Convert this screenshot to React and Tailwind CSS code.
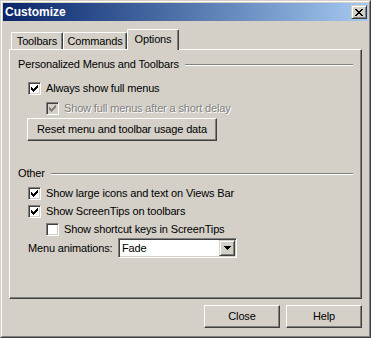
import React from "react";

const CHECK = [
  [6, 0], [5, 1], [6, 1], [0, 2], [4, 2], [5, 2], [6, 2],
  [0, 3], [1, 3], [3, 3], [4, 3], [5, 3],
  [0, 4], [1, 4], [2, 4], [3, 4], [4, 4],
  [1, 5], [2, 5], [3, 5], [2, 6],
];

function CheckMark({ color }) {
  return (
    <svg width="7" height="7" viewBox="0 0 7 7" shapeRendering="crispEdges">
      {CHECK.map(([x, y]) => (
        <rect key={`${x}-${y}`} x={x} y={y} width="1" height="1" fill={color} />
      ))}
    </svg>
  );
}

function Checkbox({ checked, disabled, label, indent }) {
  return (
    <div className={`flex h-[13px] items-center gap-[5px] ${indent ? "ml-[36px]" : "ml-[18px]"}`}>
      <div
        className={`flex h-[13px] w-[13px] shrink-0 items-center justify-center border border-t-[#808080] border-l-[#808080] border-r-white border-b-white shadow-[inset_1px_1px_0_#404040,inset_-1px_-1px_0_#d4d0c8] ${
          disabled ? "bg-[#d4d0c8]" : "bg-white"
        }`}
      >
        {checked && <CheckMark color={disabled ? "#808080" : "#000"} />}
      </div>
      <span className={`leading-[13px] ${disabled ? "text-[#808080] [text-shadow:1px_1px_0_#fff]" : ""}`}>{label}</span>
    </div>
  );
}

function GroupHeader({ children }) {
  return (
    <div className="flex h-[13px] items-center gap-[6px] pl-[8px] pr-[8px]">
      <span className="leading-[13px]">{children}</span>
      <div className="h-[2px] flex-1 border-t border-t-[#808080] border-b border-b-white" />
    </div>
  );
}

const raised =
  "border border-t-white border-l-white border-r-[#404040] border-b-[#404040] shadow-[inset_-1px_-1px_0_#808080]";
const smallRaised =
  "border border-t-[#d4d0c8] border-l-[#d4d0c8] border-r-[#404040] border-b-[#404040] shadow-[inset_1px_1px_0_#fff,inset_-1px_-1px_0_#808080] bg-[#d4d0c8]";

function Tab({ label, active, width }) {
  return (
    <div
      className={`flex items-center justify-center rounded-t-[2px] border-t border-l border-r border-t-white border-l-white border-r-[#404040] bg-[#d4d0c8] shadow-[inset_-1px_0_0_#808080] ${width} ${
        active ? "relative z-10 -mb-px h-[21px] pb-[2px]" : "h-[17px]"
      }`}
    >
      {label}
    </div>
  );
}

export default function App() {
  return (
    <div className="h-[338px] w-[371px] select-none border border-t-[#d4d0c8] border-l-[#d4d0c8] border-r-[#404040] border-b-[#404040] bg-[#d4d0c8] font-['Liberation_Sans',Arial,sans-serif] text-[11px] tracking-[-0.15px] text-black">
      <div className="flex h-full flex-col border border-t-white border-l-white border-r-[#808080] border-b-[#808080] p-px">
        {/* title bar */}
        <div className="flex h-[18px] shrink-0 items-center justify-between bg-linear-to-r from-[#0a246a] to-[#a6caf0] pl-[2px] pr-[1px]">
          <span className="text-[12px] font-bold tracking-normal text-white">Customize</span>
          <div className={`flex h-[14px] w-[16px] items-center justify-center ${smallRaised}`}>
            <svg width="8" height="7" viewBox="0 0 8 7" shapeRendering="crispEdges">
              <path d="M0 0h2v1h-2zM6 0h2v1h-2zM1 1h2v1h-2zM5 1h2v1h-2zM2 2h4v1h-4zM3 3h2v1h-2zM2 4h4v1h-4zM1 5h2v1h-2zM5 5h2v1h-2zM0 6h2v1h-2zM6 6h2v1h-2z" fill="#000" />
            </svg>
          </div>
        </div>

        <div className="flex flex-1 flex-col px-[6px] pt-[8px]">
          {/* tabs */}
          <div className="flex h-[20px] items-end pl-[2px]">
            <Tab label="Toolbars" width="w-[52px]" />
            <Tab label="Commands" width="w-[64px]" />
            <Tab label="Options" width="w-[52px]" active />
          </div>

          {/* panel */}
          <div className="flex h-[250px] flex-col border border-t-white border-l-white border-r-[#404040] border-b-[#404040] shadow-[inset_-1px_-1px_0_#808080]">
            <div className="mt-[8px]">
              <GroupHeader>Personalized Menus and Toolbars</GroupHeader>
            </div>
            <div className="mt-[11px]">
              <Checkbox checked label="Always show full menus" />
            </div>
            <div className="mt-[7px]">
              <Checkbox checked disabled indent label="Show full menus after a short delay" />
            </div>
            <div className="ml-[17px] mt-[3px]">
              <button type="button" className={`h-[23px] w-[190px] bg-[#d4d0c8] ${raised}`}>
                Reset menu and toolbar usage data
              </button>
            </div>
            <div className="mt-[26px]">
              <GroupHeader>Other</GroupHeader>
            </div>
            <div className="mt-[7px]">
              <Checkbox checked label="Show large icons and text on Views Bar" />
            </div>
            <div className="mt-[5px]">
              <Checkbox checked label="Show ScreenTips on toolbars" />
            </div>
            <div className="mt-[5px]">
              <Checkbox indent label="Show shortcut keys in ScreenTips" />
            </div>
            <div className="ml-[18px] mt-[2px] flex items-center">
              <span className="w-[90px]">Menu animations:</span>
              <div className="flex h-[20px] w-[119px] items-center border border-t-[#808080] border-l-[#808080] border-r-white border-b-white bg-white shadow-[inset_1px_1px_0_#404040,inset_-1px_-1px_0_#d4d0c8] p-px">
                <span className="flex-1 pl-[2px]">Fade</span>
                <div className={`flex h-[16px] w-[16px] items-center justify-center ${smallRaised}`}>
                  <svg width="7" height="4" viewBox="0 0 7 4" shapeRendering="crispEdges">
                    <path d="M0 0h7v1h-7zM1 1h5v1h-5zM2 2h3v1h-3zM3 3h1v1h-1z" fill="#000" />
                  </svg>
                </div>
              </div>
            </div>
          </div>

          {/* bottom buttons */}
          <div className="mt-[6px] flex justify-end gap-[6px]">
            <button type="button" className={`h-[23px] w-[76px] bg-[#d4d0c8] ${raised}`}>
              Close
            </button>
            <button type="button" className={`h-[23px] w-[76px] bg-[#d4d0c8] ${raised}`}>
              Help
            </button>
          </div>
        </div>
      </div>
    </div>
  );
}
